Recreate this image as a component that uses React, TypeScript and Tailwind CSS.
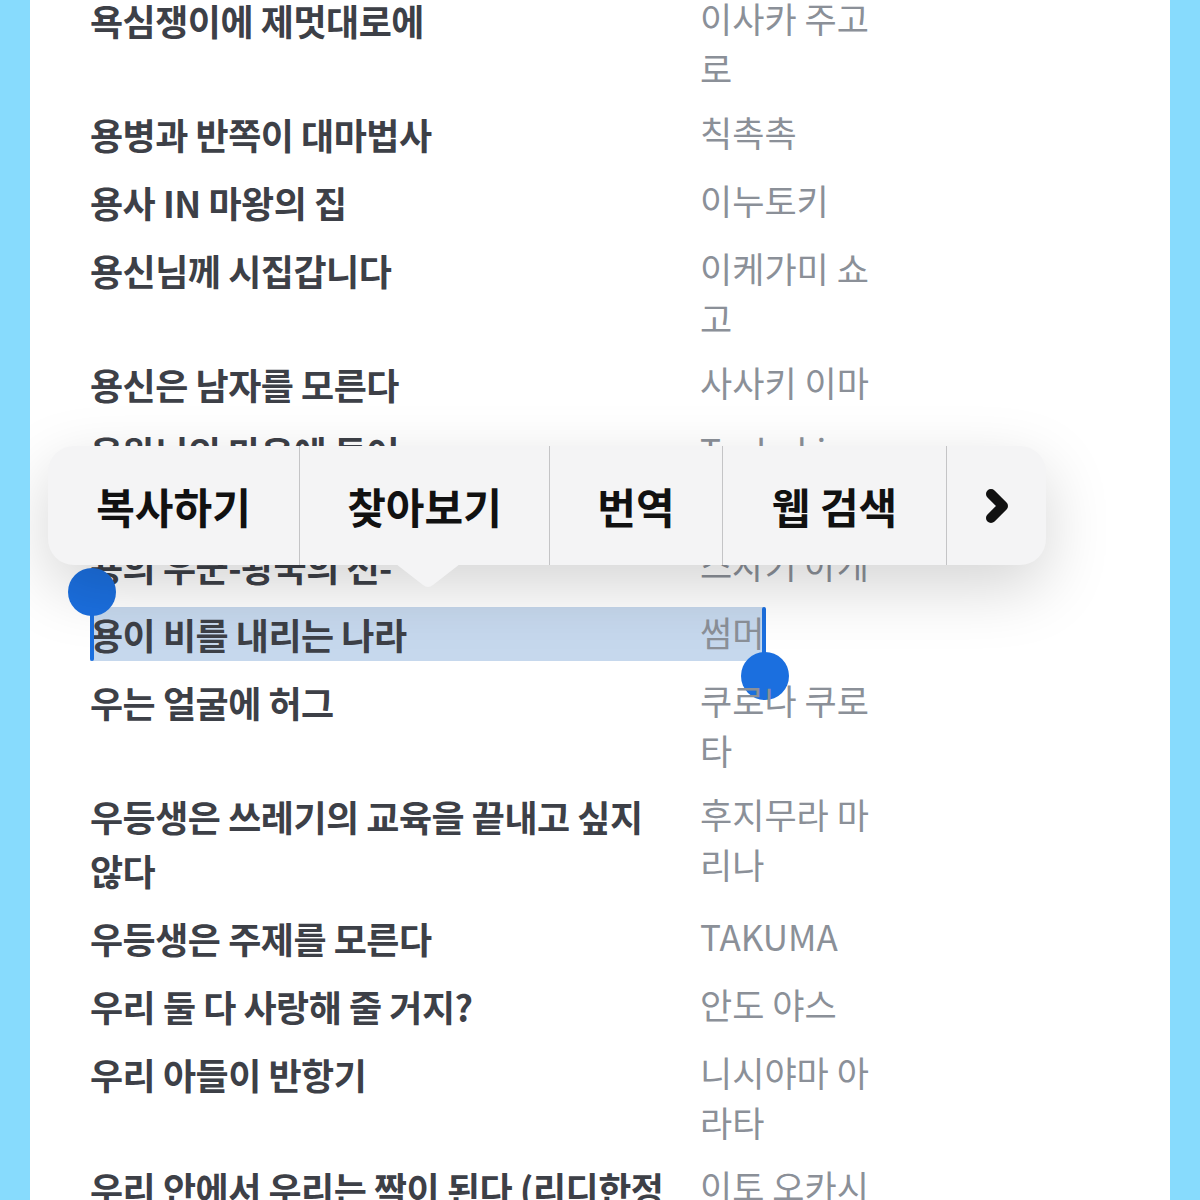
import { ChevronRight } from "lucide-react";

type Book = {
    title: string;
    author: string;
};

const books: Book[] = [
    { title: "욕심쟁이에 제멋대로에", author: "이사카 주고로" },
    { title: "용병과 반쪽이 대마법사", author: "칙촉촉" },
    { title: "용사 IN 마왕의 집", author: "이누토키" },
    { title: "용신님께 시집갑니다", author: "이케가미 쇼고" },
    { title: "용신은 남자를 모른다", author: "사사키 이마" },
    { title: "용왕님의 마음에 들어", author: "Tsubaki Nanami" },
    { title: "용의 우군-왕국의 전-", author: "스자키 아게" },
    { title: "용이 비를 내리는 나라", author: "썸머" },
    { title: "우는 얼굴에 허그", author: "쿠로나 쿠로타" },
    { title: "우등생은 쓰레기의 교육을 끝내고 싶지 않다", author: "후지무라 마리나" },
    { title: "우등생은 주제를 모른다", author: "TAKUMA" },
    { title: "우리 둘 다 사랑해 줄 거지?", author: "안도 야스" },
    { title: "우리 아들이 반항기", author: "니시야마 아라타" },
    { title: "우리 안에서 우리는 짝이 된다 (리디한정판)", author: "이토 오카시" },
];

const SELECTED = 7;

function BookRow({ book, selected }: { book: Book; selected: boolean }) {
    return (
        <div className="relative flex gap-[30px] py-[7px]">
            {/* selection highlight */}
            {selected && <div className="absolute left-0 top-[7px] h-[54px] w-[675px] bg-[#c6d8ed]" />}
            <div className="relative w-[580px] shrink-0 text-[36px] font-bold leading-[54px] tracking-[-0.5px] text-[#3d4047]">
                {book.title}
            </div>
            <div className="relative w-[182px] shrink-0 text-[35px] leading-[50px] text-[#8b9098]">
                {book.author}
            </div>
            {selected && (
                <>
                    {/* start handle */}
                    <div className="absolute left-0 top-[-8px] h-[69px] w-[4px] rounded-full bg-[#1b6fdf]" />
                    <div className="absolute left-[-22px] top-[-32px] h-[48px] w-[48px] rounded-full bg-[#1b6fdf]" />
                    {/* end handle */}
                    <div className="absolute left-[672px] top-[7px] h-[69px] w-[4px] rounded-full bg-[#1b6fdf]" />
                    <div className="absolute left-[651px] top-[52px] h-[48px] w-[48px] rounded-full bg-[#1b6fdf]" />
                </>
            )}
        </div>
    );
}

export default function App() {
    return (
        <div className="h-[1200px] w-[1200px] overflow-hidden bg-[#87dbfd] px-[30px] font-['Noto_Sans_CJK_KR','Noto_Sans',sans-serif]">
            <div className="relative h-full overflow-hidden bg-white">
                <div className="-mt-[14px] pl-[60px]">
                    {books.map((b, i) => (
                        <BookRow key={b.title} book={b} selected={i === SELECTED} />
                    ))}
                </div>

                {/* Edit menu */}
                <div className="absolute left-[18px] top-[446px]">
                    <div className="flex h-[119px] w-[998px] overflow-hidden rounded-[26px] bg-[#f4f4f5] shadow-[0_22px_64px_rgba(0,0,0,0.17)]">
                        <div className="flex w-[251px] items-center justify-center text-[42px] font-bold text-[#111]">복사하기</div>
                        <div className="flex w-[250px] items-center justify-center border-l border-[#c4c4c6] text-[42px] font-bold text-[#111]">찾아보기</div>
                        <div className="flex w-[173px] items-center justify-center border-l border-[#c4c4c6] text-[42px] font-bold text-[#111]">번역</div>
                        <div className="flex w-[224px] items-center justify-center border-l border-[#c4c4c6] text-[42px] font-bold text-[#111]">웹 검색</div>
                        <div className="flex flex-1 items-center justify-center border-l border-[#c4c4c6] text-[#111]">
                            <ChevronRight className="h-[48px] w-[48px]" strokeWidth={5} />
                        </div>
                    </div>
                    <svg className="absolute left-[348px] top-[118px]" width="64" height="26" viewBox="0 0 64 26">
                        <path d="M0 0 L27 21 Q32 25 37 21 L64 0 Z" fill="#f4f4f5" />
                    </svg>
                </div>
            </div>
        </div>
    );
}
